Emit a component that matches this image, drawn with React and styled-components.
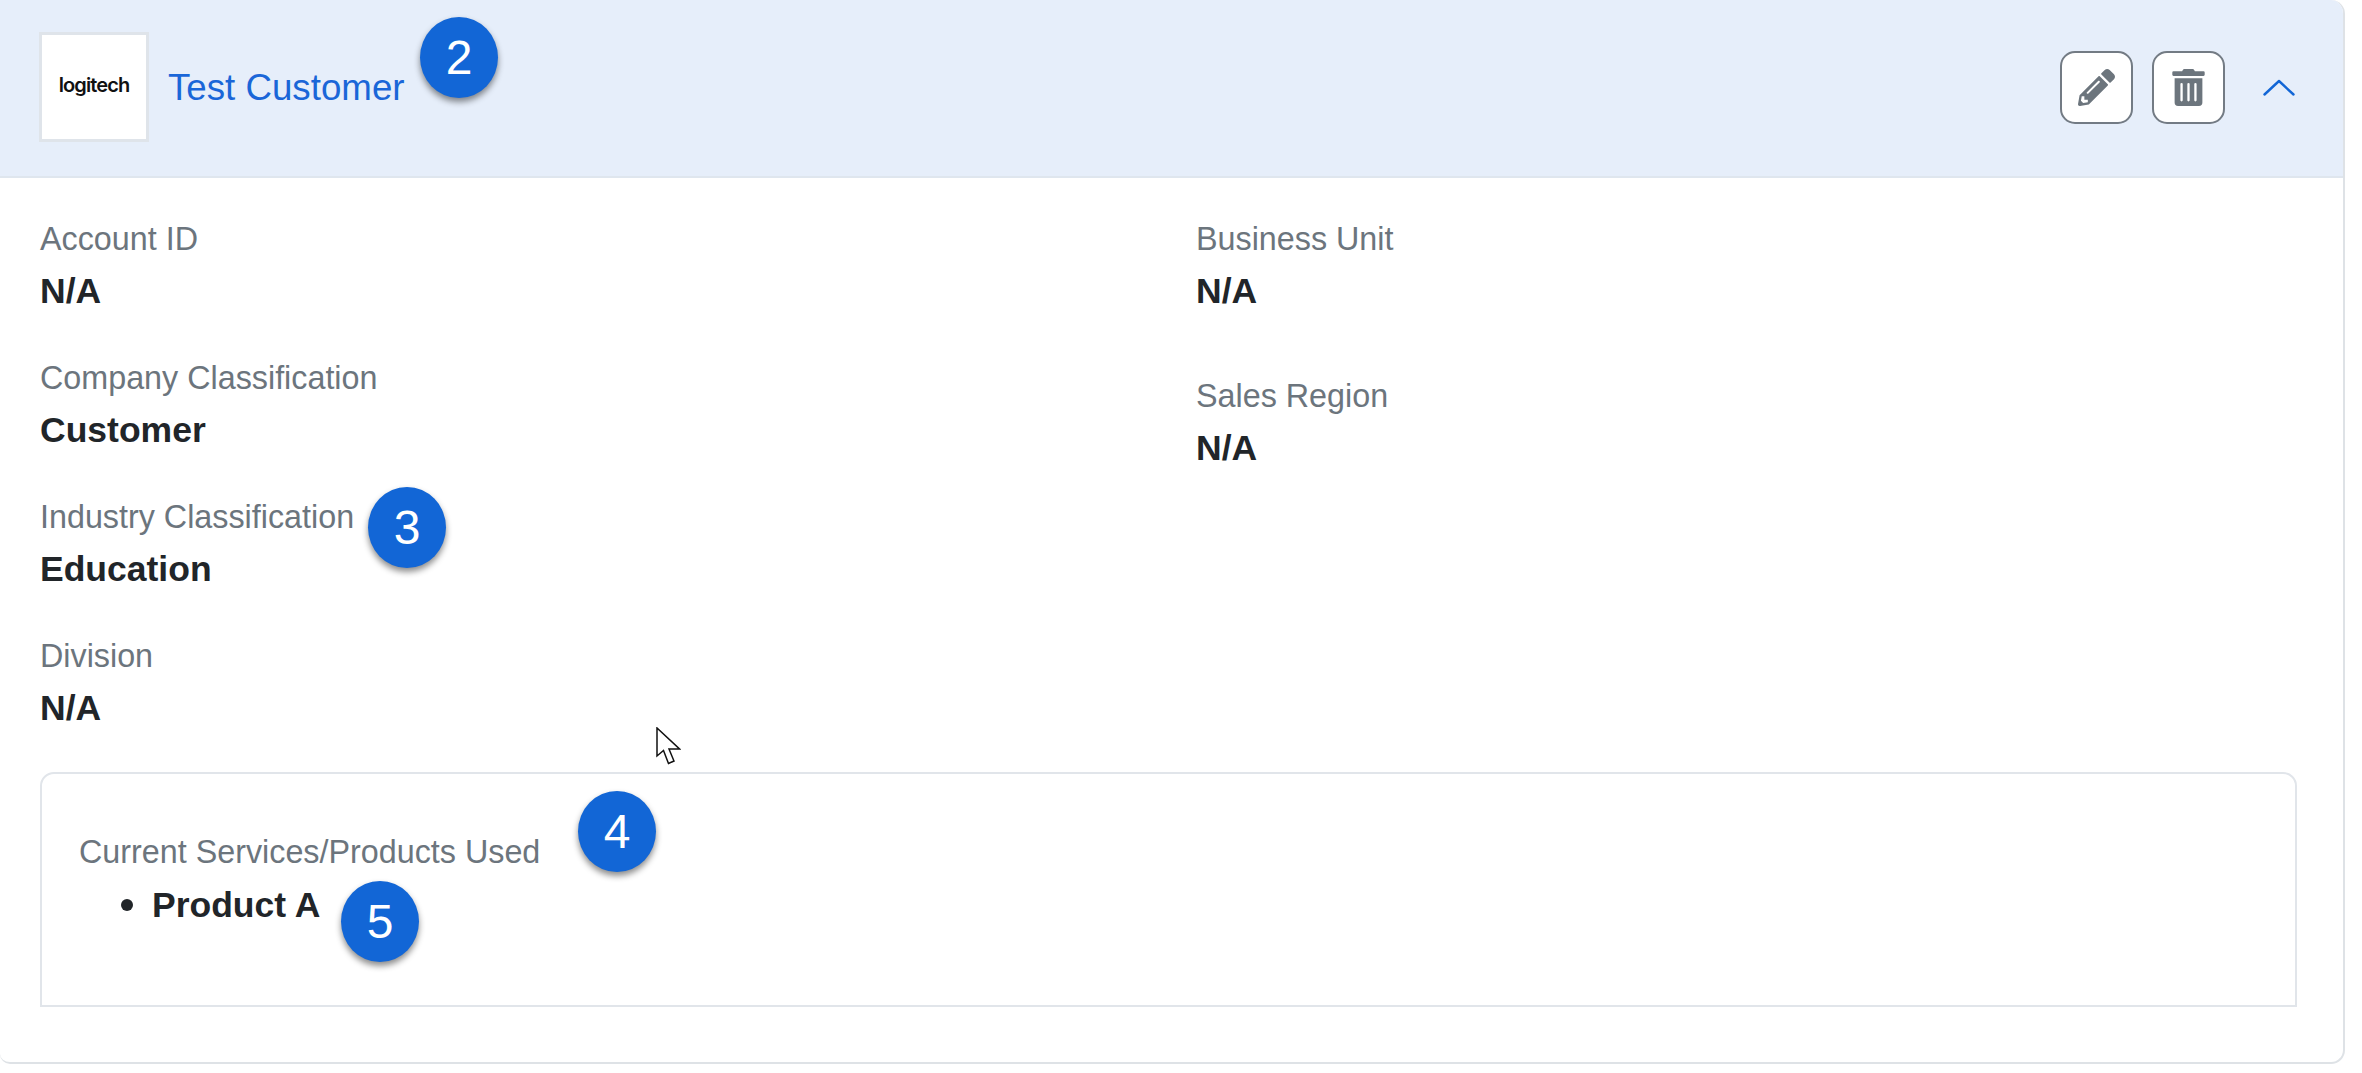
import React from "react";
import styled, { createGlobalStyle } from "styled-components";
import { FaPencilAlt, FaTrashAlt } from "react-icons/fa";

const Global = createGlobalStyle`
	html, body {
		margin: 0;
		padding: 0;
		background: #fff;
		font-family: "Liberation Sans", Arial, sans-serif;
	}
`;

function Field({ label, value }) {
	return (
		<FieldBox>
			<Label>{label}</Label>
			<Value>{value}</Value>
		</FieldBox>
	);
}

function App() {
	return (
		<Page>
			<Global />
			<Card>
				<Header>
					<LogoBox>logitech</LogoBox>
					<Title>Test Customer</Title>
					<Actions>
						<IconButton>
							<FaPencilAlt />
						</IconButton>
						<IconButton>
							<FaTrashAlt />
						</IconButton>
						<Chevron viewBox="0 0 32 17" fill="none">
							<path d="M1.5 15.5 16 2 30.5 15.5" stroke="#1266d6" strokeWidth="2.4" strokeLinecap="round" strokeLinejoin="round" />
						</Chevron>
					</Actions>
				</Header>
				<Details>
					<Column $rowHeight={139}>
						<Field label="Account ID" value="N/A" />
						<Field label="Company Classification" value="Customer" />
						<Field label="Industry Classification" value="Education" />
						<Field label="Division" value="N/A" />
					</Column>
					<Column $rowHeight={157}>
						<Field label="Business Unit" value="N/A" />
						<Field label="Sales Region" value="N/A" />
					</Column>
				</Details>
				<ServicesBox>
					<Label>Current Services/Products Used</Label>
					<ProductList>
						<li>Product A</li>
					</ProductList>
				</ServicesBox>
			</Card>

			<Badge $x={420} $y={17}>2</Badge>
			<Badge $x={368} $y={487}>3</Badge>
			<Badge $x={578} $y={791}>4</Badge>
			<Badge $x={341} $y={881}>5</Badge>

			<Cursor viewBox="0 0 25 38">
				<path d="M1 1V29L7.5 23.5 12.5 36.5 18 34 13 22H23.5Z" fill="#fff" stroke="#111" strokeWidth="1.5" strokeLinejoin="miter" />
			</Cursor>
		</Page>
	);
}

export default App;

const Page = styled.div`
	position: relative;
	width: 2362px;
	height: 1073px;
	overflow: hidden;
	background: #fff;
`;

const Card = styled.section`
	box-sizing: border-box;
	width: 2345px;
	height: 1064px;
	background: #fff;
	border: 2px solid #dee2e6;
	border-top: none;
	border-left: none;
	border-radius: 0 14px 14px 10px;
	overflow: hidden;
`;

const Header = styled.header`
	box-sizing: border-box;
	height: 178px;
	display: flex;
	align-items: center;
	padding: 0 48px 2px 39px;
	background: #e6eefa;
	border-bottom: 2px solid #dfe6ee;
`;

const LogoBox = styled.div`
	box-sizing: border-box;
	width: 110px;
	height: 110px;
	display: flex;
	align-items: center;
	justify-content: center;
	background: #fff;
	border: 3px solid #dfe4ea;
	color: #111;
	font-family: "Inter", sans-serif;
	font-size: 20px;
	font-weight: 600;
	letter-spacing: -0.9px;
	padding-bottom: 4px;
`;

const Title = styled.a`
	margin: 3px 0 0 19px;
	color: #1a66d8;
	font-size: 36.7px;
	line-height: 1;
`;

const Actions = styled.div`
	margin-left: auto;
	display: flex;
	align-items: center;
	gap: 19px;
`;

const IconButton = styled.button`
	box-sizing: border-box;
	width: 73px;
	height: 73px;
	display: flex;
	align-items: center;
	justify-content: center;
	padding: 0;
	background: #fff;
	border: 2.5px solid #737b84;
	border-radius: 15px;
	color: #6c757d;
	font-size: 37px;
`;

const Chevron = styled.svg`
	width: 32px;
	height: 17px;
	margin-left: 19px;
`;

const Details = styled.div`
	box-sizing: border-box;
	height: 594px;
	display: grid;
	grid-template-columns: 1156px 1fr;
	padding: 44px 0 0 40px;
`;

const Column = styled.div`
	display: grid;
	grid-auto-rows: ${({ $rowHeight }) => $rowHeight}px;
	align-content: start;
`;

const FieldBox = styled.div`
	display: flex;
	flex-direction: column;
	gap: 17px;
`;

const Label = styled.div`
	color: #6c757d;
	font-size: 32.3px;
	line-height: 34px;
`;

const Value = styled.div`
	color: #212529;
	font-size: 35.5px;
	font-weight: 700;
	line-height: 36px;
`;

const ServicesBox = styled.div`
	box-sizing: border-box;
	width: 2257px;
	height: 235px;
	margin: 0 0 0 40px;
	padding: 61px 37px 0;
	border: 2px solid #e1e5ea;
	border-radius: 14px 14px 0 0;
`;

const ProductList = styled.ul`
	margin: 16px 0 0;
	padding: 0 0 0 73px;
	color: #212529;
	font-size: 35.5px;
	font-weight: 700;
	line-height: 36px;

	li::marker {
		font-size: 40px;
	}
`;

const Badge = styled.div`
	position: absolute;
	left: ${({ $x }) => $x}px;
	top: ${({ $y }) => $y}px;
	width: 78px;
	height: 81px;
	display: flex;
	align-items: center;
	justify-content: center;
	border-radius: 50%;
	background: #1266d6;
	box-shadow: 0 4px 6px rgba(0, 0, 0, 0.45);
	color: #fff;
	font-size: 48px;
`;

const Cursor = styled.svg`
	position: absolute;
	left: 656px;
	top: 727px;
	width: 25px;
	height: 38px;
`;
